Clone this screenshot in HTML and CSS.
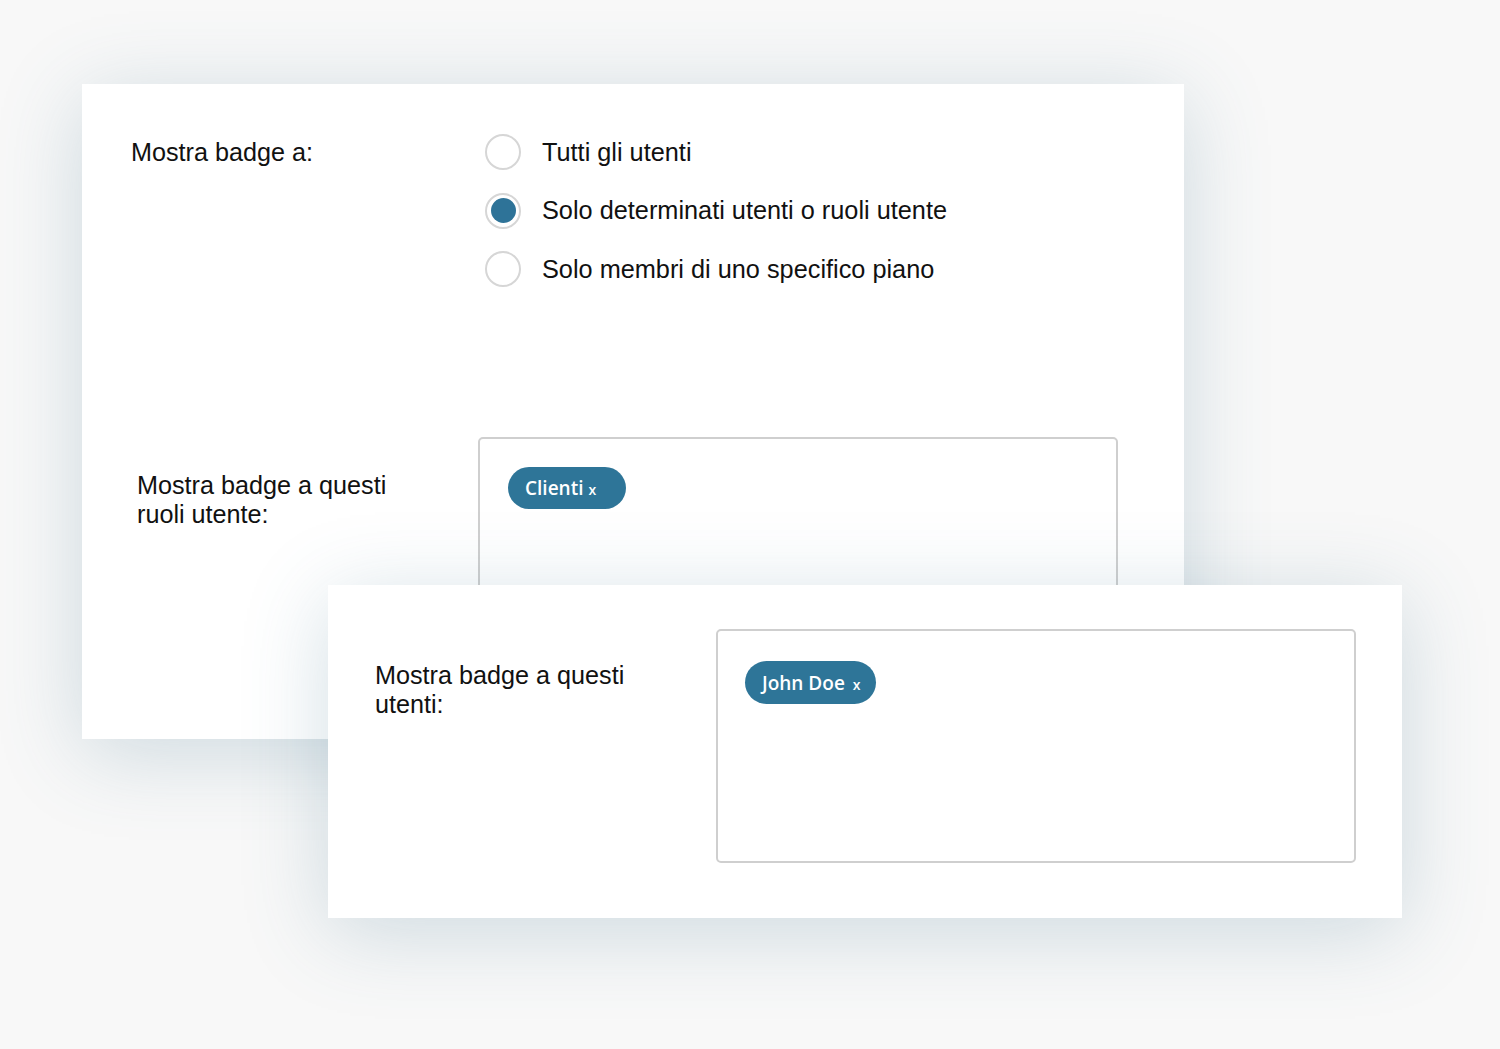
FILE: index.html
```html
<!DOCTYPE html>
<html lang="it">
<head>
    <meta charset="UTF-8">
    <title>Mostra badge</title>
    <link rel="stylesheet" href="styles.css">
</head>
<body>
    <div class="scene">
        <div class="card card-main">
            <div class="row">
                <div class="label">Mostra badge a:</div>
                <ul class="radios">
                    <li><span class="radio"></span>Tutti gli utenti</li>
                    <li><span class="radio checked"></span>Solo determinati utenti o ruoli utente</li>
                    <li><span class="radio"></span>Solo membri di uno specifico piano</li>
                </ul>
            </div>

            <div class="row row-roles">
                <div class="label label-multi">Mostra badge a questi<br>ruoli utente:</div>
                <div class="tag-box">
                    <span class="tag tag-wide">Clienti <span class="x">x</span></span>
                </div>
            </div>
        </div>

        <!-- second card sits over the first one -->
        <div class="card card-users">
            <div class="row">
                <div class="label label-multi">Mostra badge a questi<br>utenti:</div>
                <div class="tag-box">
                    <span class="tag">John Doe <span class="x">x</span></span>
                </div>
            </div>
        </div>
    </div>
</body>
</html>
```

FILE: styles.css
```css
body {
    margin: 0;
    background-color: #f8f8f8;
    font-family: "Liberation Sans", Arial, sans-serif;
    color: #111;
}
.scene {
    position: relative;
    width: 1500px;
    height: 1049px;
    padding: 84px 0 0 82px;
    box-sizing: border-box;
    overflow: hidden;
}
.card {
    background: #fff;
    box-shadow: 0 14px 80px rgba(70, 120, 145, 0.24);
    box-sizing: border-box;
}
.card-main {
    width: 1102px;
    height: 655px;
    padding: 39px 0 0 49px;
}
.card-users {
    position: absolute;
    left: 328px;
    top: 585px;
    width: 1074px;
    height: 333px;
    padding: 44px 0 0 47px;
}
.row {
    display: flex;
    align-items: flex-start;
}
.label {
    font-size: 25.2px;
    line-height: 58px;
    width: 354px;
}
.label-multi {
    line-height: 29px;
    margin-top: 32px;
}
.row-roles {
    margin-top: 138px;
}
.row-roles .label {
    width: 341px;
    padding-left: 6px;
    margin-top: 34px;
}
.card-users .label {
    width: 341px;
    margin-top: 32px;
}
.radios {
    list-style: none;
    margin: 0;
    padding: 0;
}
.radios li {
    display: flex;
    align-items: center;
    height: 58.5px;
    font-size: 25.3px;
}
.radio {
    width: 36px;
    height: 36px;
    border: 2px solid #d6d6d6;
    border-radius: 50%;
    box-sizing: border-box;
    margin-right: 21px;
    display: flex;
    align-items: center;
    justify-content: center;
}
.radio.checked::after {
    content: "";
    width: 25px;
    height: 25px;
    border-radius: 50%;
    background-color: #2e7398;
}
.tag-box {
    width: 640px;
    height: 234px;
    border: 2px solid #cfcfcf;
    border-radius: 5px;
    box-sizing: border-box;
    padding: 28px 28px;
}
.card-users .tag-box {
    padding-top: 30px;
    padding-left: 27px;
}
.tag {
    display: inline-flex;
    align-items: center;
    height: 42px;
    padding: 0 15px 0 17px;
    border-radius: 21px;
    background-color: #2e7598;
    color: #fff;
    font-family: "Open Sans", sans-serif;
    font-weight: 600;
    font-size: 19px;
}
.card-users .tag {
    height: 43px;
    border-radius: 22px;
}
.tag .x {
    font-size: 14px;
    margin-left: 8px;
    margin-top: 3px;
}
.tag-wide {
    padding-right: 30px;
}
.tag-wide .x {
    margin-left: 5px;
}
```
